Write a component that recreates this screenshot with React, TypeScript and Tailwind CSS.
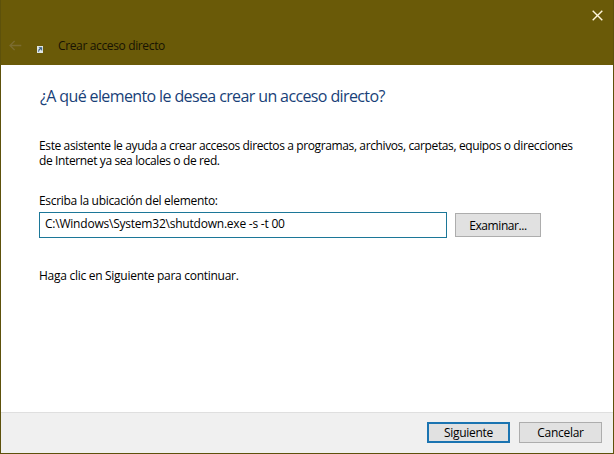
import React from "react";

function BackArrow() {
  return (
    <svg className="h-[11px] w-[13px]" viewBox="0 0 13 11" fill="none" stroke="#7b6c30" strokeWidth="1.3">
      <path d="M12.3 5.5H1M5.6 1L1 5.5L5.6 10" />
    </svg>
  );
}

function ShortcutIcon() {
  return (
    <svg className="mt-[9px] h-[7px] w-[6px]" viewBox="0 0 6 7">
      <rect width="6" height="7" fill="#dfe6e4" />
      <path d="M1.6 6V4.2Q1.6 2.8 3.4 2.8M2 1.5H4.8V4.4Z" fill="#31597f" stroke="#31597f" strokeWidth=".5" />
    </svg>
  );
}

export default function App() {
  return (
    <main className="flex h-[454px] w-[614px] flex-col border border-t-0 border-[#5d510b] bg-white font-['Open_Sans',sans-serif] text-[12px] leading-[15px] text-black">
      <header className="flex h-[65px] shrink-0 flex-col bg-[#6a5a08]">
        <div className="flex h-[30px] items-center justify-end pr-[10px]">
          <button aria-label="Cerrar">
            <svg className="h-[11px] w-[11px]" viewBox="0 0 11 11" fill="none" stroke="#fff6dc" strokeWidth="1.4">
              <path d="M.7.7L10.3 10.3M10.3.7L.7 10.3" />
            </svg>
          </button>
        </div>
        <div className="flex h-[30px] items-center pl-[8px]">
          <BackArrow />
          <div className="ml-[15px] flex w-[21px]"><ShortcutIcon /></div>
          <span className="whitespace-nowrap tracking-[-0.36px] text-[#171303]">Crear acceso directo</span>
        </div>
      </header>
      <section className="flex h-[347px] shrink-0 flex-col whitespace-nowrap pl-[38px] pt-[19px]">
        <h1 className="h-[24px] pl-px text-[16px] leading-[24px] tracking-[-0.62px] text-[#183f78]">¿A qué elemento le desea crear un acceso directo?</h1>
        <div className="mt-[30px] tracking-[-0.38px]">
          <p>Este asistente le ayuda a crear accesos directos a programas, archivos, carpetas, equipos o direcciones</p>
          <p>de Internet ya sea locales o de red.</p>
        </div>
        <label className="mt-[25px] tracking-[-0.31px]">Escriba la ubicación del elemento:</label>
        <div className="mt-[4px] flex items-center">
          <div className="h-[26px] w-[408px] border border-[#1c7798] bg-white pl-[5px] pt-[3px] tracking-[-0.22px]">C:\Windows\System32\shutdown.exe -s -t 00</div>
          <button className="ml-[8px] h-[24px] w-[86px] border border-[#adadad] bg-[#e1e1e1] tracking-[-0.4px]">Examinar...</button>
        </div>
        <p className="mt-[30px] tracking-[-0.28px]">Haga clic en Siguiente para continuar.</p>
      </section>
      <footer className="flex flex-1 justify-end gap-[9px] border-t border-[#dfdfdf] bg-[#f0f0f0] pr-[11px] pt-[9px]">
        <button className="h-[21px] w-[83px] border-2 border-[#1b74b1] bg-[#e1e1e1] tracking-[-0.3px]">Siguiente</button>
        <button className="h-[21px] w-[83px] border border-[#adadad] bg-[#e1e1e1] tracking-[-0.3px]">Cancelar</button>
      </footer>
    </main>
  );
}
